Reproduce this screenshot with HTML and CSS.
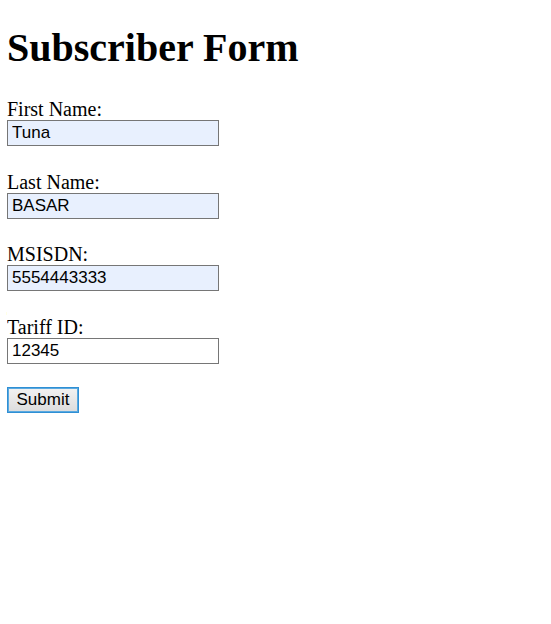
FILE: index.html
```html
<!DOCTYPE html>
<html>
<head>
<meta charset="utf-8">
<link rel="stylesheet" href="styles.css">
</head>
<body>
<h1 class="title">Subscriber Form</h1>
<form class="form">
  <div class="field">
    <label class="label" for="fn">First Name:</label>
    <input class="input filled" id="fn" type="text" value="Tuna">
  </div>
  <div class="field">
    <label class="label" for="ln">Last Name:</label>
    <input class="input filled" id="ln" type="text" value="BASAR">
  </div>
  <div class="field">
    <label class="label" for="ms">MSISDN:</label>
    <input class="input filled" id="ms" type="text" value="5554443333">
  </div>
  <div class="field">
    <label class="label" for="ti">Tariff ID:</label>
    <input class="input" id="ti" type="text" value="12345">
  </div>
  <button class="submit" type="submit">Submit</button>
</form>
</body>
</html>
```
FILE: styles.css
```css
html, body {
  background: #ffffff;
}
body {
  margin: 8px 7px;
  font-family: "Liberation Serif", "Times New Roman", serif;
  font-size: 20px;
  color: #000;
}
.title {
  font-size: 40px;
  font-weight: bold;
  margin: 17px 0 27px 0;
  line-height: 46px;
}
.form {
  display: flex;
  flex-direction: column;
  align-items: flex-start;
}
.field {
  display: flex;
  flex-direction: column;
  align-items: flex-start;
  margin-bottom: 24.5px;
}
.label {
  line-height: 22px;
  height: 22px;
}
.input {
  box-sizing: border-box;
  width: 212px;
  height: 26px;
  margin: 0;
  padding: 0 4px;
  border: 1px solid #767676;
  border-radius: 0;
  background: #ffffff;
  font-family: "Liberation Sans", Arial, sans-serif;
  font-size: 17px;
  color: #000;
  outline: none;
}
.input.filled {
  background: #e8f0fe;
}
.submit {
  box-sizing: border-box;
  width: 72px;
  height: 26px;
  margin: -1px 0 0 0;
  padding: 0;
  border: 1px solid #2f8fd4;
  box-shadow: inset 0 0 0 1px #5aa9e0;
  border-radius: 0;
  background: linear-gradient(#f2f2f2, #dcdcdc);
  font-family: "Liberation Sans", Arial, sans-serif;
  font-size: 17px;
  color: #000;
}
```
